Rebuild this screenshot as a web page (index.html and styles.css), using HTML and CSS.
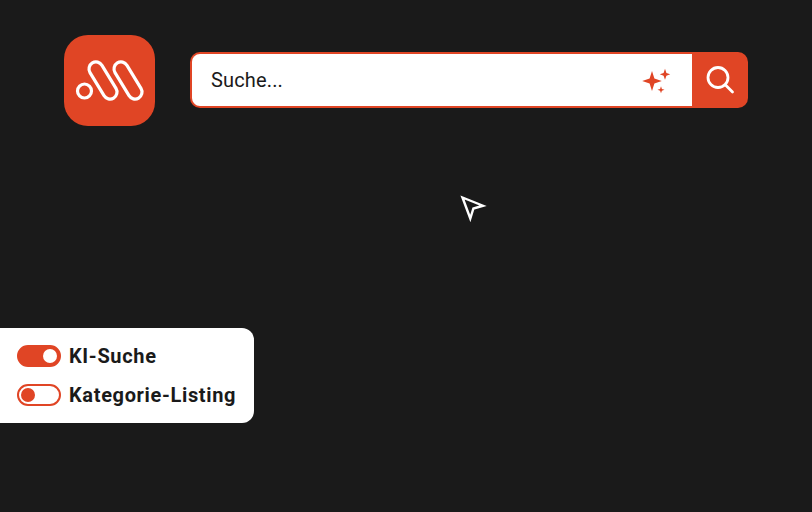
FILE: index.html
```html
<!DOCTYPE html>
<html lang="de">
<head>
<meta charset="utf-8">
<title>Suche</title>
<link rel="stylesheet" href="styles.css">
</head>
<body>
<main class="stage">
  <header class="header">
    <div class="logo">
      <svg class="logo-mark" width="91" height="91" viewBox="0 0 91 91" fill="none" stroke="#fff" stroke-width="3.2">
        <circle cx="20.5" cy="56" r="7"/>
        <rect x="32" y="25" width="14" height="41" rx="7" transform="rotate(-31.3 39 45.5)"/>
        <rect x="57" y="25" width="14" height="41" rx="7" transform="rotate(-31.3 64 45.5)"/>
      </svg>
    </div>
    <form class="search">
      <div class="search-field">
        <span class="search-text">Suche...</span>
        <svg class="sparkle" width="30" height="30" viewBox="0 0 30 30" fill="#e04525">
          <path d="M11 6 L13.4 13.6 L20.8 16 L13.4 18.4 L11 26 L8.6 18.4 L1.2 16 L8.6 13.6 Z"/>
          <path d="M24 3.8 L25.4 7.9 L29.2 9.3 L25.4 10.7 L24 14.8 L22.6 10.7 L18.8 9.3 L22.6 7.9 Z"/>
          <path d="M20 21.3 L20.9 23.9 L23.5 24.8 L20.9 25.7 L20 28.3 L19.1 25.7 L16.5 24.8 L19.1 23.9 Z"/>
        </svg>
      </div>
      <div class="search-button">
        <svg width="56" height="56" viewBox="0 0 56 56" fill="none" stroke="#fff" stroke-width="2.8" stroke-linecap="round">
          <circle cx="26" cy="25.5" r="10"/>
          <path d="M33.5 33 L40.5 40"/>
        </svg>
      </div>
    </form>
  </header>

  <svg class="cursor" width="28" height="28" viewBox="0 0 28 28" fill="none" stroke="#fff" stroke-width="2.4" stroke-linejoin="miter">
    <path d="M3.5 3.5 L24 11.7 L14.4 14.5 L11.3 24.5 Z"/>
  </svg>

  <section class="panel">
    <div class="row">
      <span class="toggle toggle-on"><span class="knob"></span></span>
      <span class="label">KI-Suche</span>
    </div>
    <div class="row">
      <span class="toggle toggle-off"><span class="knob"></span></span>
      <span class="label">Kategorie-Listing</span>
    </div>
  </section>
</main>
</body>
</html>
```
FILE: styles.css
```css
* { box-sizing: border-box; }
html, body { margin: 0; height: 100%; overflow: hidden; }
body {
  background: #1a1a1a;
  color: #1a1a1a;
  font-family: "Roboto", "Liberation Sans", sans-serif;
}
.stage { position: relative; height: 512px; padding-top: 35px; }
.header { display: flex; align-items: flex-start; gap: 35px; padding-left: 64px; }
.logo { width: 91px; height: 91px; border-radius: 24px; background: #e04525; flex: none; }
.logo-mark { display: block; }
.search { display: flex; width: 558px; height: 56px; margin-top: 17px; }
.search-field {
  flex: 1;
  display: flex;
  align-items: center;
  justify-content: space-between;
  padding: 0 21px 0 19px;
  background: #fff;
  border: 2px solid #e04525;
  border-right: 0;
  border-radius: 10px 0 0 10px;
}
.search-text { font-size: 20px; letter-spacing: 0.15px; }
.sparkle { display: block; }
.search-button { width: 56px; height: 56px; background: #e04525; border-radius: 0 10px 10px 0; }
.search-button svg { display: block; }
.cursor { position: absolute; left: 459px; top: 194px; }
.panel {
  display: flex;
  flex-direction: column;
  gap: 17px;
  width: 254px;
  height: 95px;
  margin-top: 202px;
  padding: 17px 0 0 17px;
  background: #fff;
  border-radius: 0 12px 12px 0;
}
.row { display: flex; align-items: center; gap: 8px; height: 22px; }
.toggle { display: flex; align-items: center; width: 44px; height: 22px; border-radius: 11px; border: 2px solid #e04525; flex: none; }
.toggle-on { background: #e04525; justify-content: flex-end; padding-right: 2px; }
.toggle-off { padding-left: 2px; }
.knob { width: 14px; height: 14px; border-radius: 50%; }
.toggle-on .knob { background: #fff; }
.toggle-off .knob { background: #e04525; }
.label { font-size: 20px; font-weight: 700; letter-spacing: 0.65px; white-space: nowrap; }
```
